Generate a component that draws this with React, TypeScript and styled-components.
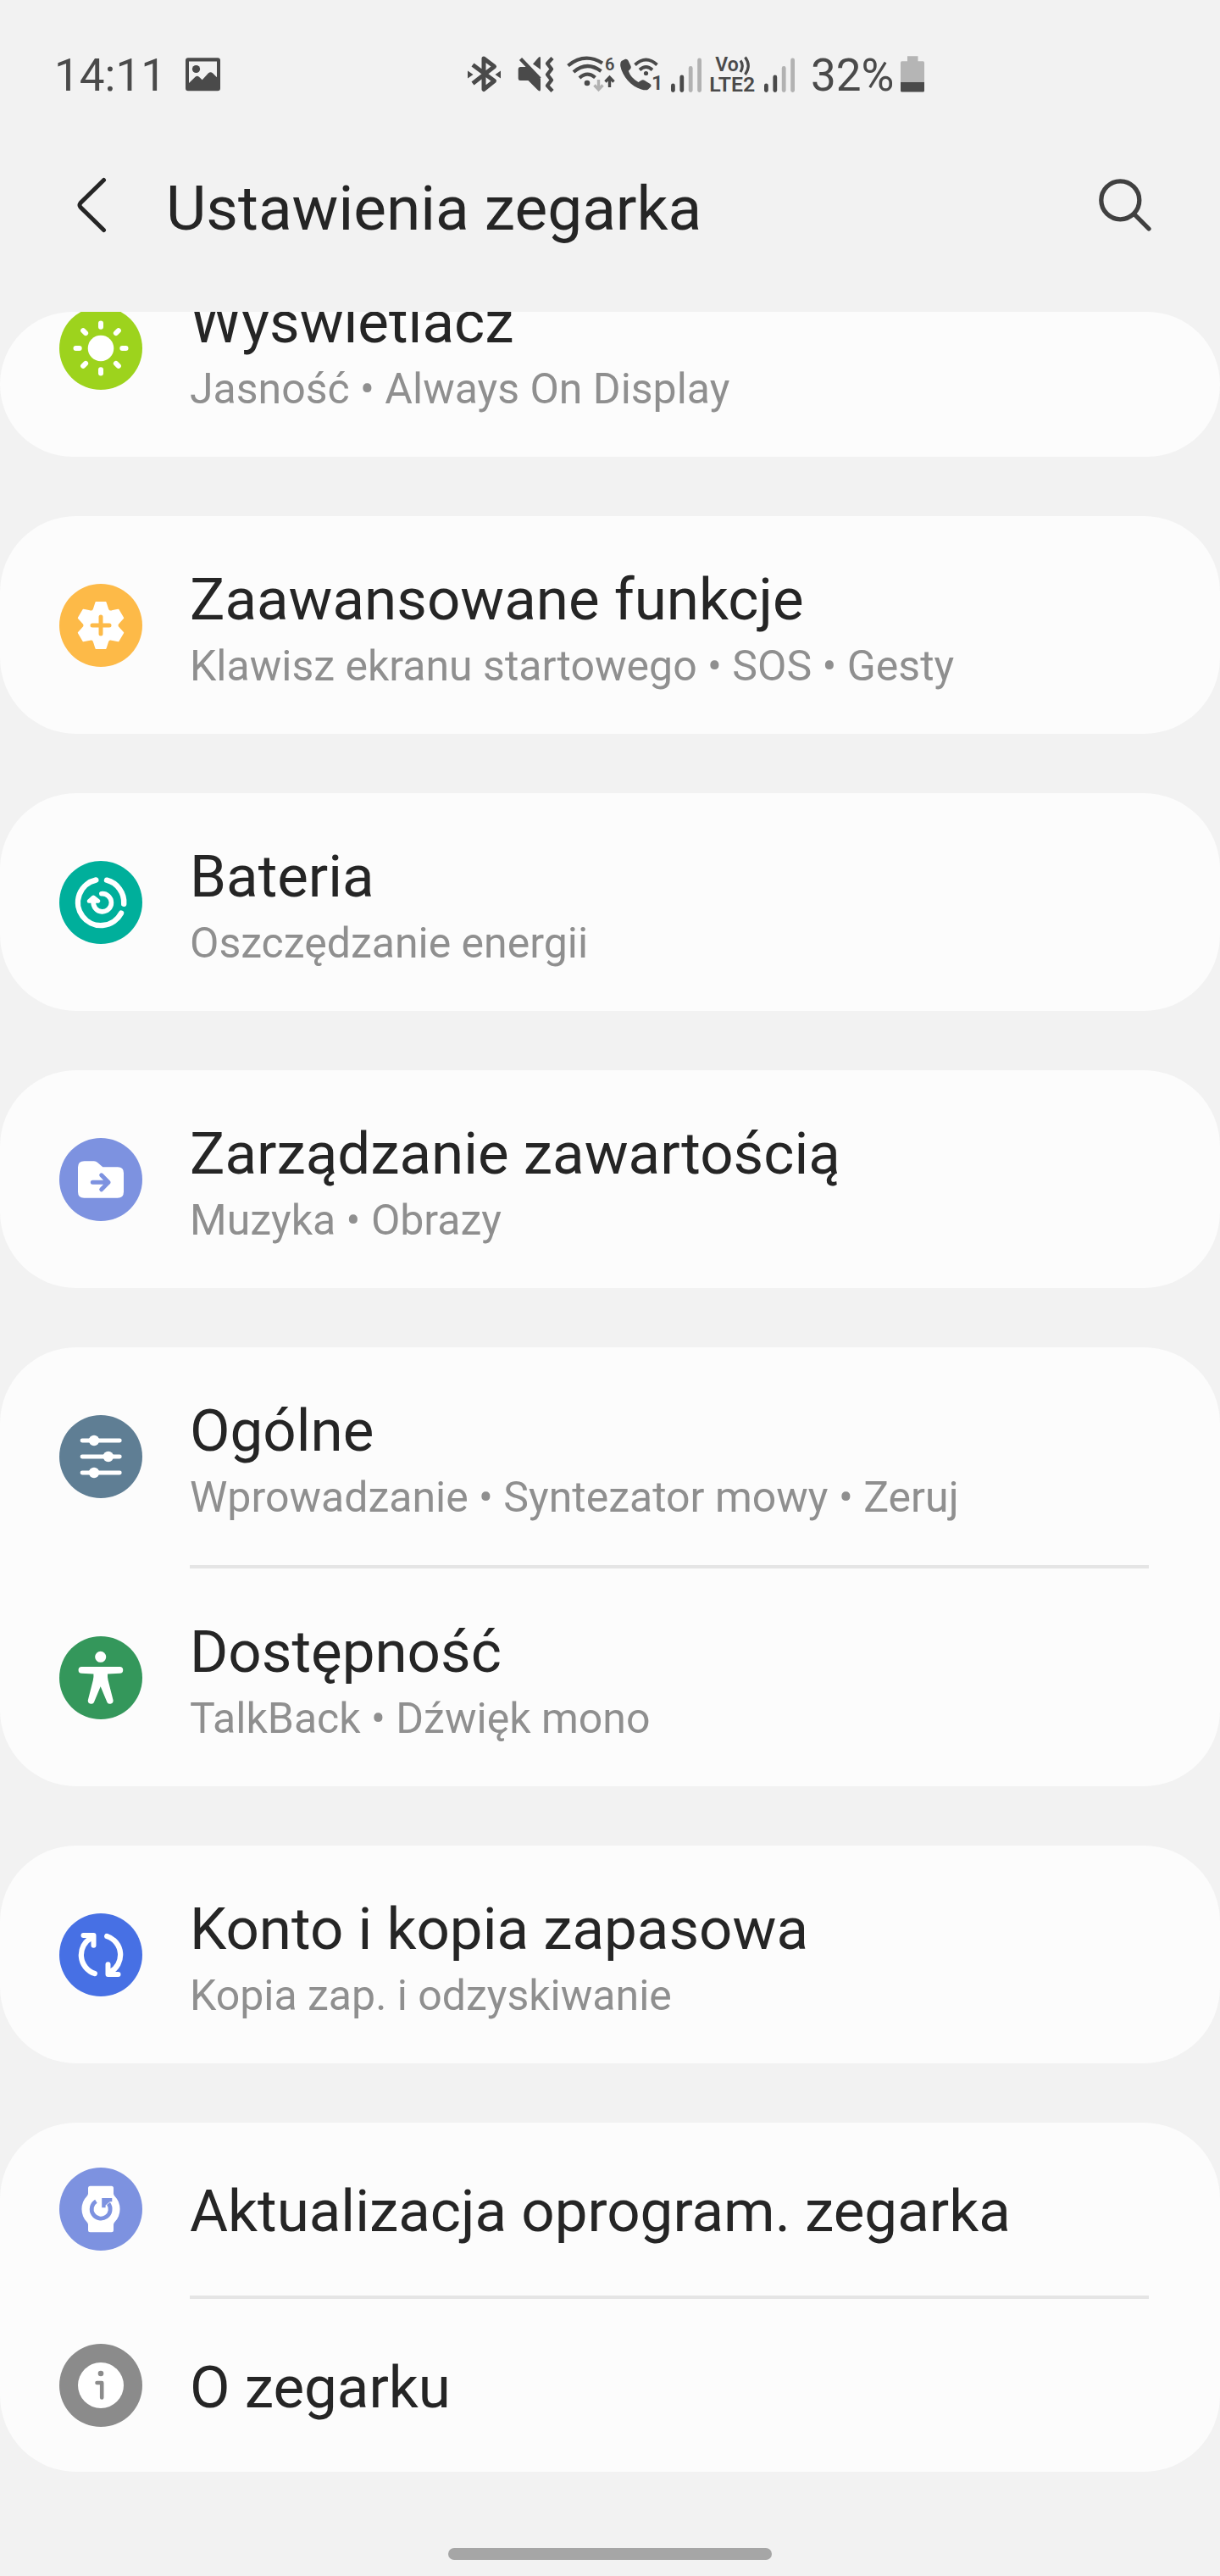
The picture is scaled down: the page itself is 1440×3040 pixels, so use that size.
import React from "react";
import styled, { createGlobalStyle } from "styled-components";

const INK = "#4a4a4a";
const FAINT = "#b2b2b2";

const Global = createGlobalStyle`
  html, body { margin: 0; padding: 0; background: #f2f2f2; }
  * { box-sizing: border-box; }
`;

const Screen = styled.div`
  width: 1440px;
  height: 3040px;
  display: flex;
  flex-direction: column;
  background: #f2f2f2;
  color: #252525;
  font-family: Roboto, "Noto Sans", sans-serif;
  overflow: hidden;
`;

const StatusBar = styled.header`
  display: flex;
  align-items: flex-start;
  height: 180px;
  padding-top: 60px;
  color: ${INK};
`;

const StatusText = styled.span<{ $width: number; $indent: number }>`
  width: ${(p) => p.$width}px;
  padding-left: ${(p) => p.$indent}px;
  font-size: 53px;
  line-height: 58px;
  white-space: nowrap;
`;

const StatusSpacer = styled.div`
  width: 284px;
`;

const StatusSvg = styled.svg`
  display: block;
  flex: none;
  height: 55px;
`;

const SvgText = styled.text`
  font-family: Roboto, sans-serif;
  font-weight: 600;
  fill: ${INK};
`;

const TitleBar = styled.div`
  display: flex;
  align-items: flex-start;
  height: 188px;
  padding: 20px 68px 0 80px;
`;

const ToolButton = styled.button`
  display: block;
  flex: none;
  width: 84px;
  height: 84px;
  padding: 0;
  border: 0;
  background: none;
  svg { display: block; }
`;

const Heading = styled.h1`
  flex: 1;
  margin: 2px 0 0 32px;
  font-size: 73px;
  line-height: 88px;
  font-weight: 400;
`;

const List = styled.main`
  display: flex;
  flex-direction: column;
  gap: 70px;
`;

const Card = styled.section<{ $clipped?: boolean }>`
  display: flex;
  flex-direction: column;
  justify-content: flex-end;
  height: ${(p) => (p.$clipped ? "171px" : "auto")};
  border-radius: 90px;
  background: #fcfcfc;
  overflow: hidden;
`;

const Row = styled.div<{ $single: boolean }>`
  display: flex;
  flex: none;
  align-items: center;
  gap: 56px;
  height: ${(p) => (p.$single ? 204 : 257)}px;
  padding: 0 70px;
`;

const Divider = styled.hr`
  width: 1132px;
  height: 4px;
  margin: 0 84px 0 224px;
  border: 0;
  background: #e5e5e5;
`;

const Badge = styled.svg`
  display: block;
  flex: none;
  width: 98px;
  height: 98px;
`;

const Labels = styled.div<{ $single: boolean }>`
  display: flex;
  flex-direction: column;
  padding-top: ${(p) => (p.$single ? 6 : 15)}px;
  white-space: nowrap;
`;

const Title = styled.div`
  font-size: 69.1px;
  line-height: 82px;
`;

const Subtitle = styled.div`
  font-size: 50px;
  line-height: 75px;
  color: #8f8f8f;
`;

const NavArea = styled.footer`
  display: flex;
  justify-content: center;
  padding-top: 90px;
`;

const HomeHandle = styled.div`
  width: 382px;
  height: 14px;
  border-radius: 7px;
  background: #a6a6a6;
`;

type StatusIconProps = { x: number; w: number; children: React.ReactNode };
const StatusIcon = ({ x, w, children }: StatusIconProps) => (
  <StatusSvg width={w} viewBox={`${x} 60 ${w} 55`} fill="none">
    {children}
  </StatusSvg>
);

const SignalBars = ({ x }: { x: number }) => (
  <StatusIcon x={x} w={48}>
    {[101, 91, 80.5, 71].map((top, i) => (
      <path
        key={top}
        d={`M${x + 8.4 + i * 10.4} ${top}V106.5`}
        stroke={i < 2 ? INK : FAINT}
        strokeWidth={4.8}
        strokeLinecap="round"
      />
    ))}
  </StatusIcon>
);

const gearPath = () => {
  const base: [number, number][] = [
    [-7.6, -20.8],
    [-5.6, -27],
    [5.6, -27],
    [7.6, -20.8],
    [8.6, -14.8],
  ];
  const at = ([x, y]: [number, number], k: number) => {
    const a = (k * Math.PI) / 3;
    const px = x * Math.cos(a) - y * Math.sin(a);
    const py = x * Math.sin(a) + y * Math.cos(a);
    return `${px.toFixed(2)} ${py.toFixed(2)}`;
  };
  let d = `M${at(base[0], 0)}`;
  for (let k = 0; k < 6; k++) {
    d += `L${at(base[1], k)}L${at(base[2], k)}L${at(base[3], k)}`;
    d += `Q${at(base[4], k)} ${at(base[0], k + 1)}`;
  }
  return `${d}Z`;
};

const round = { strokeLinecap: "round", strokeLinejoin: "round" } as const;

const glyphs: Record<string, React.ReactNode> = {
  display: (
    <g stroke="#fff" strokeWidth={6} {...round}>
      <circle r={15.3} fill="#fff" stroke="none" />
      {[0, 45, 90, 135, 180, 225, 270, 315].map((a) => (
        <path key={a} d="M0-25.3V-29.5" transform={`rotate(${a})`} />
      ))}
    </g>
  ),
  advanced: (
    <g {...round}>
      <path d={gearPath()} fill="#fff" stroke="#fff" strokeWidth={2} />
      <path d="M-10 0H10M0-10V10" stroke="#fdba48" strokeWidth={5} />
    </g>
  ),
  battery: (
    <g stroke="#fff" strokeWidth={6.4} {...round}>
      <path d="M-5.7-26.5A27.1 27.1 0 1 0 24 12.7M7-26.3A27.1 27.1 0 0 1 27.2 1.7" />
      <path d="M.8-10.3A10.6 10.6 0 1 1-8.7-1" strokeWidth={5.6} />
      <path d="M-14-1.6L-8.7-6.2L-3-1.6Z" fill="#fff" strokeWidth={4.6} />
    </g>
  ),
  content: (
    <g {...round}>
      <path
        d="M-19.5-21.7H-8Q-5.5-21.7-3.8-20L2.3-14.7H20Q27-14.7 27-7.7V14.5Q27 21.8 19.7 21.8H-19.7Q-27 21.8-27 14.5V-14.4Q-27-21.7-19.5-21.7Z"
        fill="#fff"
      />
      <path d="M-9.7 3.2H9M.7-5.2L9 3.2L.7 11.8" stroke="#7d92e0" strokeWidth={5} />
    </g>
  ),
  general: (
    <g stroke="#fff" strokeWidth={4.8} {...round}>
      <path d="M-22-19H22.3M-22 0H22.3M-22 19H22.3" />
      <g fill="#fff" stroke="none">
        <circle cx={-8} cy={-19} r={6.2} />
        <circle cx={8.8} cy={0} r={6.2} />
        <circle cx={-8} cy={19} r={6.2} />
      </g>
    </g>
  ),
  accessibility: (
    <g fill="#fff">
      <circle cx={-0.3} cy={-24.7} r={6.5} />
      <path d="M-22.5-13H22.3A3.9 3.9 0 0 1 22.4-5.2L8-4.4Q7.7-.5 8.6 3L14.6 26.4A3.9 3.9 0 0 1 7.6 29.2L-.3 10.2L-8.2 29.2A3.9 3.9 0 0 1-15.2 26.4L-9.2 3Q-8.3-.5-8.6-4.4L-22.6-5.2A3.9 3.9 0 0 1-22.5-13Z" />
    </g>
  ),
  account: (
    <g stroke="#fff" strokeWidth={6.3} {...round}>
      {[0, 180].map((a) => (
        <g key={a} transform={`rotate(${a})`}>
          <path d="M-7.2 22A23.1 23.1 0 0 1-11-20.3" />
          <path d="M-20.5-23H-8.5V-11.3" strokeWidth={6} />
          <path d="M-15-21.5L-8.5-21.5V-14.5Z" fill="#fff" strokeWidth={2} />
        </g>
      ))}
    </g>
  ),
  update: (
    <g>
      <path
        d="M-12.5-27.3H12.5Q15-27.3 15-24.8V-18.5Q15-17 16.2-15.6A22.3 22.3 0 0 1 16.2 15.6Q15 17 15 18.5V24.8Q15 27.3 12.5 27.3H-12.5Q-15 27.3-15 24.8V18.5Q-15 17-16.2 15.6A22.3 22.3 0 0 1-16.2-15.6Q-15-17-15-18.5V-24.8Q-15-27.3-12.5-27.3Z"
        fill="#fff"
      />
      <path d="M-5.6-9.3A11 11 0 1 0 9-6.5" stroke="#7d92e0" strokeWidth={4.8} />
      <path d="M1.2-13H13.3V-8.8H10.8L5.6-4.6V-1.8H1.2Z" fill="#7d92e0" />
    </g>
  ),
  about: (
    <g {...round}>
      <circle r={27} fill="#fff" />
      <circle cy={-14} r={3.3} fill="#8b8b8b" />
      <path d="M-4.5-3H1.2V14.4" stroke="#8b8b8b" strokeWidth={4.6} />
    </g>
  ),
};

type Item = { icon: string; color: string; title: string; sub?: string };

const groups: Item[][] = [
  [{ icon: "display", color: "#9dd31d", title: "Wyświetlacz", sub: "Jasność • Always On Display" }],
  [{ icon: "advanced", color: "#fdba48", title: "Zaawansowane funkcje", sub: "Klawisz ekranu startowego • SOS • Gesty" }],
  [{ icon: "battery", color: "#00af9b", title: "Bateria", sub: "Oszczędzanie energii" }],
  [{ icon: "content", color: "#7d92e0", title: "Zarządzanie zawartością", sub: "Muzyka • Obrazy" }],
  [
    { icon: "general", color: "#5f7e94", title: "Ogólne", sub: "Wprowadzanie • Syntezator mowy • Zeruj" },
    { icon: "accessibility", color: "#34975b", title: "Dostępność", sub: "TalkBack • Dźwięk mono" },
  ],
  [{ icon: "account", color: "#4770e4", title: "Konto i kopia zapasowa", sub: "Kopia zap. i odzyskiwanie" }],
  [
    { icon: "update", color: "#7d92e0", title: "Aktualizacja oprogram. zegarka" },
    { icon: "about", color: "#8b8b8b", title: "O zegarku" },
  ],
];

const SettingRow = ({ icon, color, title, sub }: Item) => (
  <Row $single={!sub}>
    <Badge viewBox="-49 -49 98 98" fill="none">
      <circle r={49} fill={color} />
      {glyphs[icon]}
    </Badge>
    <Labels $single={!sub}>
      <Title>{title}</Title>
      {sub && <Subtitle>{sub}</Subtitle>}
    </Labels>
  </Row>
);

const Status = () => (
  <StatusBar>
    <StatusText $width={212} $indent={64}>14:11</StatusText>
    <StatusIcon x={212} w={52}>
      <path
        fillRule="evenodd"
        d="M222 68.3H257Q260 68.3 260 71.3V104.3Q260 107.3 257 107.3H222Q219 107.3 219 104.3V71.3Q219 68.3 222 68.3ZM223 72.5V98L230.5 90.8Q232.7 88.8 235 90.8L238.7 94.2L246 86.3Q248.5 84 251 86.3L256 91.3V72.5Z"
        fill={INK}
      />
      <circle cx={231.5} cy={81.5} r={4.6} fill={INK} />
    </StatusIcon>
    <StatusSpacer />
    <StatusIcon x={548} w={56}>
      <path d="M558 76.5L583.5 95.5L571 105.5V69L583.5 78.5L558 98.5" stroke={INK} strokeWidth={5} strokeLinejoin="round" />
      <path d="M552 83.5L558.5 88L552 92.5ZM591 83.5L584.5 88L591 92.5Z" fill={INK} />
    </StatusIcon>
    <StatusIcon x={604} w={57}>
      <path d="M614 79H624L638 93V105.5Q638 109 635 106.5L623.5 95H614Q611.7 95 611.7 92.5V81.5Q611.7 79 614 79Z" fill={INK} />
      <path d="M614.5 69.5L637 93" stroke={INK} strokeWidth={4.4} />
      <path d="M629 75.5L635.5 68Q638 65.5 638 69V82Z" fill={INK} />
      <path d="M652 68.5L646 75L651 81.5L646 88L651 94.5L646 101L652 107.5" stroke={INK} strokeWidth={4.4} strokeLinejoin="round" />
    </StatusIcon>
    <StatusIcon x={661} w={68}>
      <path d="M670.5 77.5Q690 61.5 711 74.5M677 85Q692.5 71.5 709.5 84M684 92Q693 83.5 702.5 91.5" stroke={INK} strokeWidth={4.2} />
      <circle cx={693} cy={98} r={3.3} fill={INK} />
      <path d="M706.5 94V106M701.5 100.5L706.5 105.7L711.5 100.5" stroke={FAINT} strokeWidth={3.4} />
      <path d="M719.5 103V91.5M714.5 96.5L719.5 91.3L724.5 96.5" stroke={INK} strokeWidth={3.4} />
      <SvgText x={714} y={83} fontSize={20}>6</SvgText>
    </StatusIcon>
    <StatusIcon x={729} w={57}>
      <path
        d="M733.5 72L738 69.8Q740.3 69.2 741.5 71.5L744.5 78Q745.4 80.5 743.5 82L741.8 83.8Q744.5 92 753.5 97L757 94.8Q759 93.6 761 95L767 98.8Q769.5 100.5 768 102.5L765 105.5Q763 107.2 757 105.5C745 102 734.5 90 732.3 78Q731.8 73.8 733.5 72Z"
        fill={INK}
      />
      <path d="M749.5 76.5Q762.5 64.5 775.5 76.5M755 82.5Q762.5 75.5 770 82.5" stroke={INK} strokeWidth={3.8} />
      <circle cx={762.5} cy={86.5} r={2.6} fill={INK} />
      <SvgText x={769} y={106} fontSize={24}>1</SvgText>
    </StatusIcon>
    <SignalBars x={786} />
    <StatusIcon x={834} w={62}>
      <SvgText x={844.3} y={83.7} fontSize={23}>Vo</SvgText>
      <path d="M874 71.5Q878.5 77.5 874 85M879.5 67.5Q887 77.5 879.5 88" stroke={INK} strokeWidth={3.2} />
      <SvgText x={837.3} y={108} fontSize={24.5} textLength={54} lengthAdjust="spacingAndGlyphs">LTE2</SvgText>
    </StatusIcon>
    <SignalBars x={896} />
    <StatusText $width={115} $indent={13}>32%</StatusText>
    <StatusIcon x={1059} w={36}>
      <path d="M1071 66.3H1083.5V72.3H1089.5Q1091 72.3 1091 74V97H1063V74Q1063 72.3 1064.5 72.3H1071Z" fill="#b5b5b5" />
      <path d="M1063 97H1091V107Q1091 108.5 1089.5 108.5H1064.5Q1063 108.5 1063 107Z" fill={INK} />
    </StatusIcon>
  </StatusBar>
);

export default function App() {
  return (
    <>
      <Global />
      <Screen>
        <Status />
        <TitleBar>
          <ToolButton aria-label="Wstecz">
            <svg width="84" height="84" viewBox="80 200 84 84" fill="none">
              <path d="M122.5 212.5L95 239.5Q93 242 95 244.5L122.5 271.5" stroke="#252525" strokeWidth={5} strokeLinecap="round" />
            </svg>
          </ToolButton>
          <Heading>Ustawienia zegarka</Heading>
          <ToolButton aria-label="Szukaj">
            <svg width="84" height="84" viewBox="1288 200 84 84" fill="none">
              <g stroke="#404040" strokeWidth={5.3} strokeLinecap="round">
                <circle cx={1322.3} cy={236.3} r={22.5} />
                <path d="M1339 253L1356 270" />
              </g>
            </svg>
          </ToolButton>
        </TitleBar>
        <List>
          {groups.map((items, i) => (
            <Card key={items[0].title} $clipped={i === 0}>
              {items.map((item, j) => (
                <React.Fragment key={item.title}>
                  {j > 0 && <Divider />}
                  <SettingRow {...item} />
                </React.Fragment>
              ))}
            </Card>
          ))}
        </List>
        <NavArea>
          <HomeHandle />
        </NavArea>
      </Screen>
    </>
  );
}
